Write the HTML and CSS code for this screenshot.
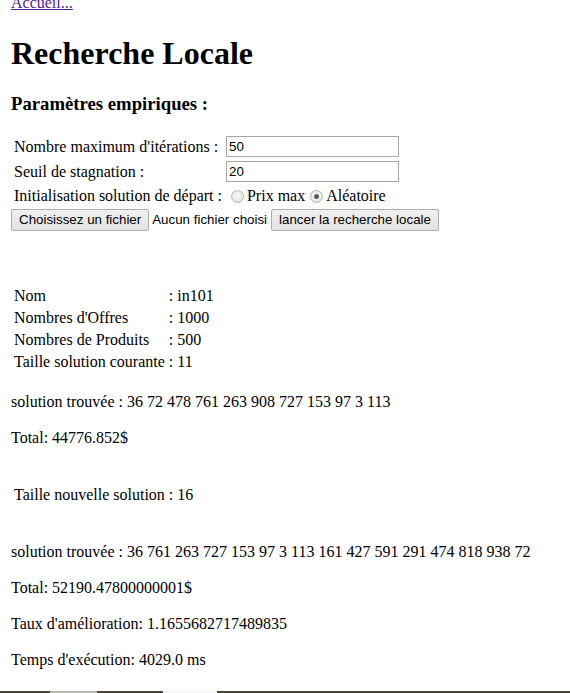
FILE: index.html
```html
<!DOCTYPE html>
<html lang="fr">
<head>
<meta charset="utf-8">
<title>Recherche Locale</title>
<link rel="stylesheet" href="styles.css">
</head>
<body>
<div class="page">
  <a class="home" href="#">Accueil...</a>
  <h1 class="title">Recherche Locale</h1>
  <h3 class="subtitle">Paramètres empiriques :</h3>
  <form class="params">
    <table class="ptable">
      <tr>
        <td>Nombre maximum d'itérations :</td>
        <td><input class="txt" type="text" value="50"></td>
      </tr>
      <tr>
        <td>Seuil de stagnation :</td>
        <td><input class="txt" type="text" value="20"></td>
      </tr>
      <tr>
        <td>Initialisation solution de départ :</td>
        <td class="radios">
          <span class="radio"></span>Prix max
          <span class="radio checked"></span>Aléatoire
        </td>
      </tr>
    </table>
    <div class="actions">
      <span class="btn">Choisissez un fichier</span>
      <span class="nofile">Aucun fichier choisi</span>
      <span class="btn">lancer la recherche locale</span>
    </div>
  </form>

  <table class="itable first">
    <tr><td>Nom</td><td>: in101</td></tr>
    <tr><td>Nombres d'Offres</td><td>: 1000</td></tr>
    <tr><td>Nombres de Produits</td><td>: 500</td></tr>
    <tr><td>Taille solution courante</td><td>: 11</td></tr>
  </table>
  <div class="result">
    <div class="line">solution trouvée : 36 72 478 761 263 908 727 153 97 3 113</div>
    <div class="line">Total: 44776.852$</div>
  </div>
  <table class="itable second">
    <tr><td>Taille nouvelle solution : 16</td></tr>
  </table>
  <div class="result">
    <div class="line">solution trouvée : 36 761 263 727 153 97 3 113 161 427 591 291 474 818 938 72</div>
    <div class="line">Total: 52190.47800000001$</div>
    <div class="line">Taux d'amélioration: 1.1655682717489835</div>
    <div class="line">Temps d'exécution: 4029.0 ms</div>
  </div>
</div>
<div class="taskbar"><span class="seg s1"></span><span class="seg s2"></span></div>
</body>
</html>
```
FILE: styles.css
```css
html, body {
  margin: 0;
  padding: 0;
  background: #ffffff;
}
body {
  font-family: "Liberation Serif", "Times New Roman", serif;
  font-size: 16px;
  line-height: 18px;
  color: #000;
  overflow: hidden;
}
.page {
  margin: -6px 8px 0 8px;
}
.home {
  display: block;
  width: max-content;
  margin-left: 3px;
  color: #551a8b;
  text-decoration: underline;
  line-height: 18px;
  height: 18px;
}
.title {
  font-size: 32px;
  font-weight: bold;
  line-height: 37px;
  margin: 23px 0 0 3px;
}
.subtitle {
  font-size: 18.72px;
  font-weight: bold;
  line-height: 22px;
  margin: 21px 0 0 3px;
}
.params {
  margin-top: 18px;
}
.ptable {
  border-collapse: separate;
  border-spacing: 2px;
  margin-left: 3px;
}
.ptable td {
  padding: 1px;
  vertical-align: middle;
  white-space: nowrap;
}
.txt {
  box-sizing: border-box;
  width: 173px;
  height: 21px;
  margin: 0;
  border: 1px solid #a9a9a9;
  padding: 1px 2px;
  font-family: "Liberation Sans", Arial, sans-serif;
  font-size: 13.33px;
  color: #000;
  display: block;
}
.radios {
  display: flex;
  align-items: center;
  height: 20px;
}
.radio {
  box-sizing: border-box;
  width: 13px;
  height: 13px;
  border-radius: 50%;
  border: 1px solid #b4b4b4;
  background: radial-gradient(circle at 50% 40%, #fafafa 0%, #e8e8e8 65%, #d6d6d6 100%);
  margin: 1px 3px 0 5px;
  position: relative;
}
.radio.checked::after {
  content: "";
  position: absolute;
  left: 3px;
  top: 3px;
  width: 5px;
  height: 5px;
  border-radius: 50%;
  background: radial-gradient(circle, #444 0%, #666 60%, #8f8f8f 100%);
}
.actions {
  display: flex;
  align-items: center;
  gap: 3px;
  margin: 0 0 0 3px;
  font-family: "Liberation Sans", Arial, sans-serif;
  font-size: 13.33px;
}
.btn {
  box-sizing: border-box;
  display: inline-flex;
  align-items: center;
  height: 22px;
  padding: 0 7px;
  border: 1px solid #adadad;
  border-radius: 2px;
  background: linear-gradient(#f0f0f0, #e3e3e3);
  color: #000;
  line-height: 16px;
}
.nofile {
  color: #000;
  margin-right: 1px;
}
.itable {
  border-collapse: separate;
  border-spacing: 2px;
  margin-left: 3px;
}
.itable td {
  padding: 1px;
  white-space: nowrap;
}
.itable.first {
  margin-top: 53px;
}
.result {
  margin-left: 3px;
  margin-top: 19px;
}
.line {
  height: 36px;
}
.itable.second {
  margin-top: 18px;
}
.itable.second + .result {
  margin-top: 36px;
}
.taskbar {
  position: fixed;
  left: 0;
  right: 0;
  bottom: 0;
  height: 2px;
  background: #4a4433;
}
.seg {
  position: absolute;
  top: 0;
  height: 2px;
}
.s1 {
  left: 50px;
  width: 47px;
  background: #b9b9ad;
}
.s2 {
  left: 163px;
  width: 54px;
  background: #f4f4f4;
}
```
